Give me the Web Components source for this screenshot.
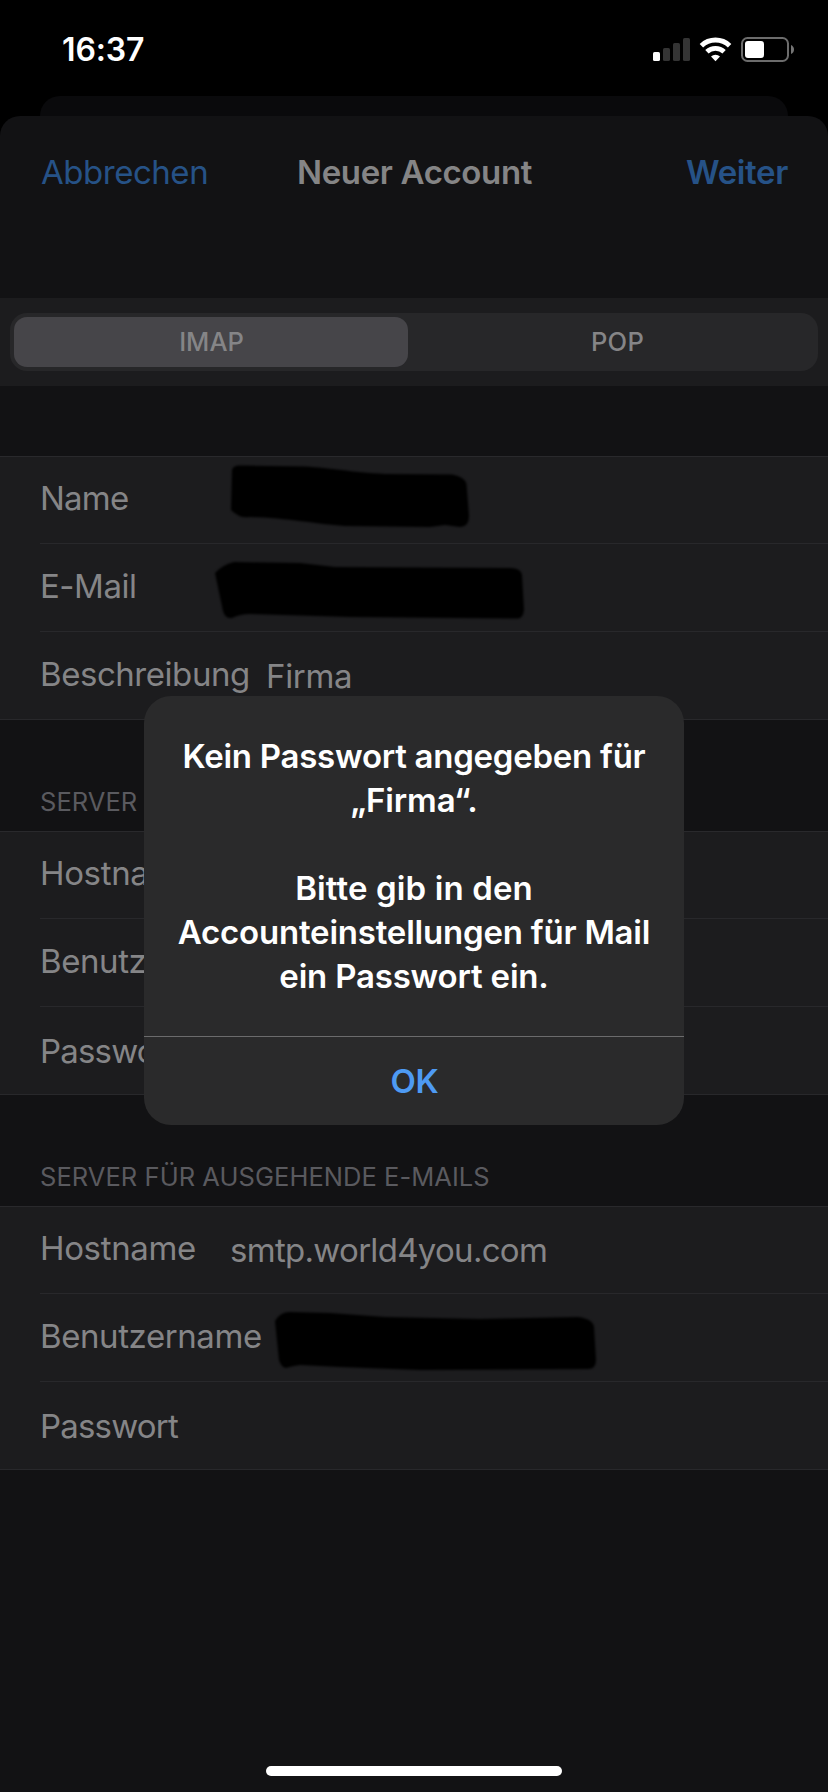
<!DOCTYPE html>
<html lang="de">
<head>
<meta charset="utf-8">
<title>Neuer Account</title>
<style>
  html, body { margin: 0; background: #000; }
  body { width: 828px; height: 1792px; overflow: hidden; font-family: Inter, "Liberation Sans", sans-serif; }
</style>
</head>
<body>
<phone-screen>
  <status-bar slot="status">16:37</status-bar>
  <nav-bar>
    <span slot="left" style="letter-spacing:-.47px">Abbrechen</span>
    <span slot="title" style="letter-spacing:-.36px">Neuer Account</span>
    <span slot="right" style="letter-spacing:-.35px">Weiter</span>
  </nav-bar>
  <segmented-control>
    <span slot="first">IMAP</span>
    <span slot="second" style="letter-spacing:.3px">POP</span>
  </segmented-control>
  <form-group short>
    <form-row style="--ls:-.77px">Name
      <marker-stroke slot="value" d="M232 14 Q233 9 241 9.5 L305 10.5 C330 12 350 16 385 18 L452 18.5 Q465 21 466.5 28 L469 60 Q469 71 460 71 L445 69 L430 71 L345 70 C315 68 290 62 250 61 Q240 63 231 54 Z"></marker-stroke>
    </form-row>
    <form-row style="--ls:-.47px">E-Mail
      <marker-stroke slot="value" d="M215 29 Q222 21 234 18 L300 19 L335 23 L510 24 Q521 24 522 31 L524 66 Q523 75 517 74.5 L350 73 L250 70 Q240 70 232 74 Q225 75 223 67 Z"></marker-stroke>
    </form-row>
    <form-row last style="--ls:-.45px;--label:226px">Beschreibung<span slot="value" style="letter-spacing:-.33px">Firma</span></form-row>
  </form-group>
  <form-group>
    <span slot="heading">SERVER</span>
    <form-row style="--ls:-.35px">Hostna</form-row>
    <form-row style="--ls:-.41px">Benutz</form-row>
    <form-row last low style="--ls:-.8px">Passwo</form-row>
  </form-group>
  <form-group>
    <span slot="heading">SERVER FÜR AUSGEHENDE E-MAILS</span>
    <form-row style="--ls:-.35px">Hostname<span slot="value" style="letter-spacing:-.7px">smtp.world4you.com</span></form-row>
    <form-row style="--ls:-.41px">Benutzername
      <marker-stroke slot="value" d="M275 27 Q280 18 290 18 L330 19 L385 23 L480 25 L578 23 Q593 25 594 33 L596 66 Q596 75 588 75 L420 76 L340 73 L300 71 Q292 72 286 74 Q281 73 279 66 Z"></marker-stroke>
    </form-row>
    <form-row last low style="--ls:-.8px">Passwort</form-row>
  </form-group>
  <alert-dialog slot="overlay">
    <div style="letter-spacing:-.26px">Kein Passwort angegeben für</div>
    <div style="letter-spacing:-.13px">„Firma“.</div>
    <div>&nbsp;</div>
    <div style="letter-spacing:.12px">Bitte gib in den</div>
    <div style="letter-spacing:-.21px">Accounteinstellungen für Mail</div>
    <div style="letter-spacing:-.2px">ein Passwort ein.</div>
    <span slot="action">OK</span>
  </alert-dialog>
</phone-screen>
<script>
function define(name, html, setup) {
  const template = document.createElement('template');
  template.innerHTML = html;
  customElements.define(name, class extends HTMLElement {
    constructor() {
      super();
      this.attachShadow({ mode: 'open' }).append(template.content.cloneNode(true));
    }
    connectedCallback() { if (setup) setup(this, this.shadowRoot); }
  });
}

define('phone-screen', `
<style>
  :host { display: flex; flex-direction: column; position: relative; width: 828px; height: 1792px; background: #000; overflow: hidden; }
  .behind { flex: none; height: 20px; margin: 0 40px; border-radius: 20px 20px 0 0; background: #0a0a0c; }
  .sheet { flex: 1; display: flex; flex-direction: column; border-radius: 20px 20px 0 0; background: #121214; }
  .home { width: 296px; height: 10px; border-radius: 5px; background: #fff; margin: auto auto 16px; }
</style>
<slot name="status"></slot>
<div class="behind"></div>
<main class="sheet"><slot></slot><div class="home"></div></main>
<slot name="overlay"></slot>`);

define('status-bar', `
<style>
  :host { display: flex; flex: none; box-sizing: border-box; height: 96px; padding: 0 32px 0 62px; align-items: flex-start; justify-content: space-between; color: #fff; }
  .time { margin-top: 30px; font-size: 32px; font-weight: 600; line-height: 39px; letter-spacing: -.14px; }
  svg { margin-top: 34px; display: block; }
</style>
<span class="time"><slot></slot></span>
<svg width="146" height="30" viewBox="650 34 146 30">
  <rect x="653" y="52" width="7" height="9" rx="1.6" fill="#fff"/>
  <g fill="#343434">
    <rect x="663" y="48" width="7" height="13" rx="1.6"/>
    <rect x="673" y="43" width="7" height="18" rx="1.6"/>
    <rect x="683" y="38" width="7" height="23" rx="1.6"/>
  </g>
  <path d="M701.4 45.7 A20.6 20.6 0 0 1 729.6 45.7" fill="none" stroke="#fff" stroke-width="5"/>
  <path d="M706.9 51.8 A12.6 12.6 0 0 1 724.1 51.8" fill="none" stroke="#fff" stroke-width="4.8"/>
  <path d="M715.5 61.2 L711 56.4 A6.6 6.6 0 0 1 720 56.4 Z" fill="#fff"/>
  <rect x="742" y="38" width="46" height="23" rx="5.5" fill="none" stroke="#6c6c6c" stroke-width="2"/>
  <rect x="745" y="41" width="19" height="17" rx="3" fill="#fff"/>
  <path d="M791 45 Q794 46.5 794 49.5 T791 54 Z" fill="#757575"/>
</svg>`);

define('nav-bar', `
<style>
  :host { display: grid; flex: none; grid-template-columns: 1fr auto 1fr; align-items: center; height: 112px; padding: 0 40px; font-size: 33px; line-height: 40px; color: #858586; }
  .left, .right { color: #265287; }
  .left { padding-left: 1px; }
  .title, .right { font-weight: 600; }
  .title { padding-left: 1px; }
  .right { text-align: right; }
</style>
<div class="left"><slot name="left"></slot></div>
<div class="title"><slot name="title"></slot></div>
<div class="right"><slot name="right"></slot></div>`);

define('segmented-control', `
<style>
  :host { display: block; flex: none; margin-top: 70px; padding: 15px 10px; background: #1c1c1e; }
  .track { display: grid; grid-template-columns: 394px 1fr; height: 50px; padding: 4px; border-radius: 17px; background: #272729; font-size: 25.5px; font-weight: 500; color: #858587; text-align: center; line-height: 50px; }
  .on { border-radius: 13px; background: #464549; padding-left: 1px; }
  .off { padding-left: 13px; }
</style>
<div class="track"><div class="on"><slot name="first"></slot></div><div class="off"><slot name="second"></slot></div></div>`);

define('form-group', `
<style>
  :host { display: block; flex: none; padding-bottom: 1px; }
  .head { display: flex; box-sizing: border-box; height: 111px; align-items: flex-end; padding: 0 40px 14px; font-size: 25.5px; line-height: 31px; letter-spacing: .05px; color: #5a5a5f; }
  :host([short]) .head { height: 70px; }
  .rows { border-top: 1px solid #29292c; margin-bottom: -1px; background: #1c1c1e; }
  .rows ::slotted(form-row:first-of-type) { margin-top: -1px; }
</style>
<div class="head"><slot name="heading"></slot></div>
<div class="rows"><slot></slot></div>`);

define('form-row', `
<style>
  :host { display: flex; position: relative; height: 88px; align-items: center; padding-left: 40px; font-size: 33px; line-height: 40px; color: #858587; }
  .label { flex: none; width: var(--label, 190px); padding-bottom: 4px; letter-spacing: var(--ls, 0); white-space: nowrap; }
  :host([low]) .label { padding-bottom: 0; }
  .line { position: absolute; left: 40px; right: 0; bottom: 0; height: 1px; background: #28282b; }
  :host([last]) .line { left: 0; }
</style>
<div class="label"><slot></slot></div>
<slot name="value"></slot>
<div class="line"></div>`);

define('marker-stroke', `
<style>
  :host { display: block; position: absolute; left: 0; top: 0; }
  svg { display: block; overflow: visible; }
  path { filter: blur(1.2px); }
</style>
<svg width="828" height="88" viewBox="0 0 828 88"><path fill="#000"/></svg>`,
(host, root) => root.querySelector('path').setAttribute('d', host.getAttribute('d')));

define('alert-dialog', `
<style>
  :host { display: block; position: absolute; left: 144px; top: 696px; width: 540px; border-radius: 27px; background: #2a2a2b; overflow: hidden; font-size: 33px; font-weight: 600; line-height: 44px; text-align: center; color: #fff; }
  .text { padding: 38px 0; white-space: nowrap; }
  .action { height: 89px; line-height: 88px; border-top: 1px solid #6b6b6c; color: #4e9af3; letter-spacing: -.2px; box-sizing: border-box; padding-left: 1px; }
</style>
<div class="text"><slot></slot></div>
<div class="action"><slot name="action"></slot></div>`);
</script>
</body>
</html>
